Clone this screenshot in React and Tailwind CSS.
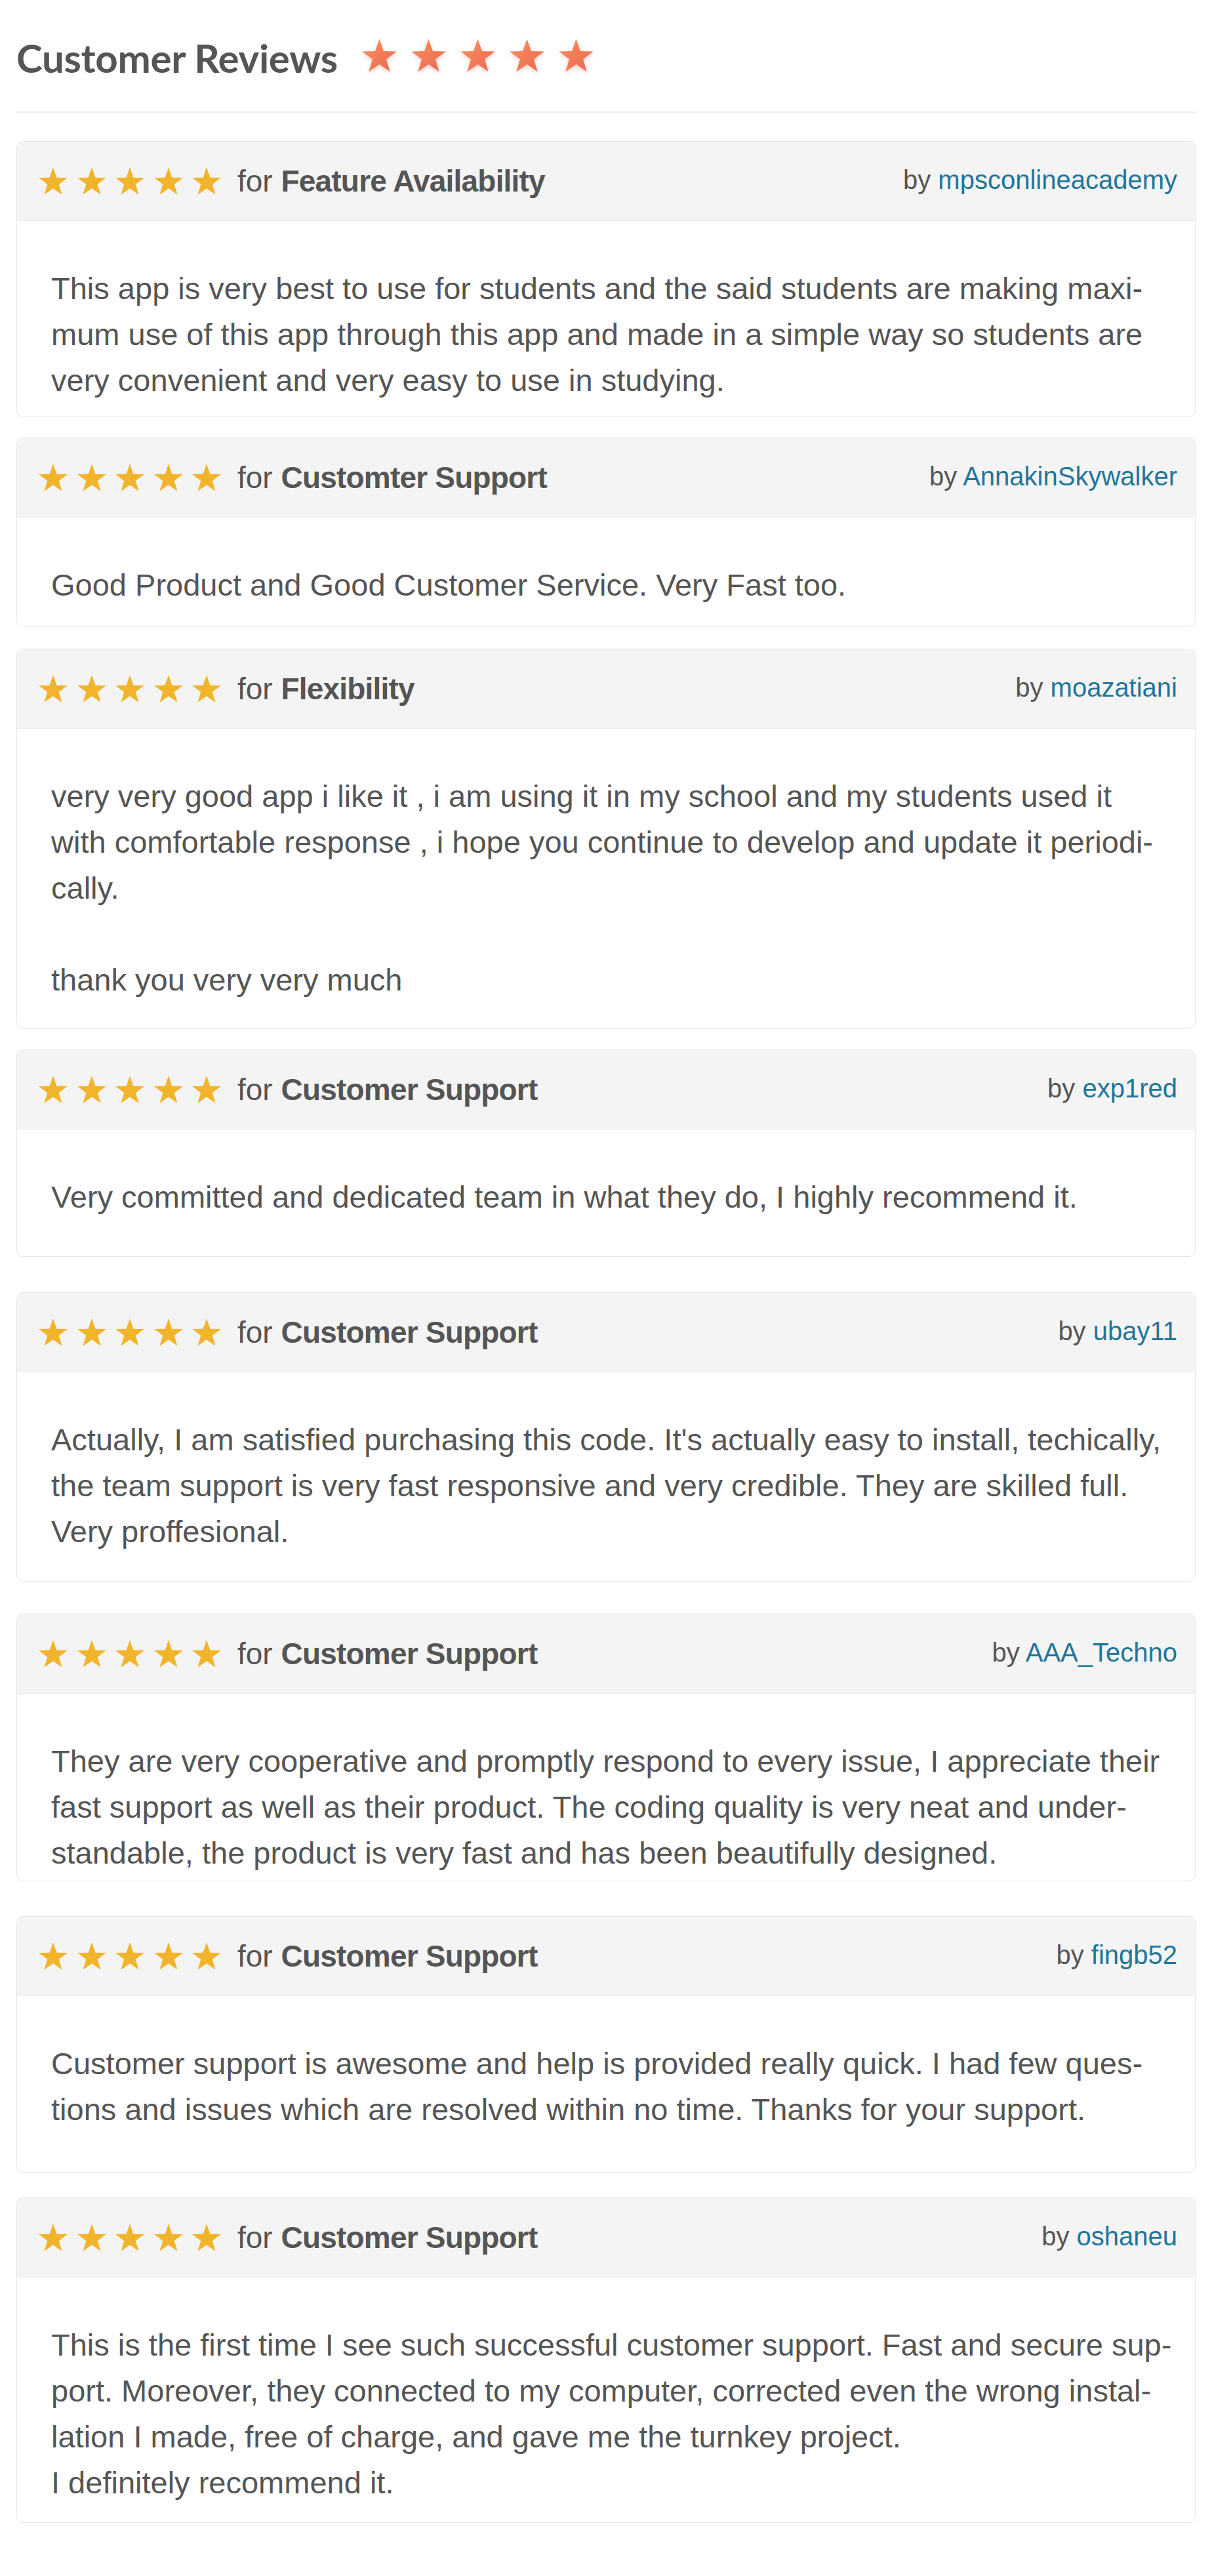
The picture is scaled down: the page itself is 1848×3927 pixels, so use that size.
const reviews = [
  {
    topic: "Feature Availability",
    author: "mpsconlineacademy",
    body: "pt-[68px] pb-[20px]",
    gap: "mb-[31px]",
    lines: [
      "This app is very best to use for students and the said students are making maxi-",
      "mum use of this app through this app and made in a simple way so students are",
      "very convenient and very easy to use in studying.",
    ],
  },
  {
    topic: "Customter Support",
    author: "AnnakinSkywalker",
    body: "pt-[68px] pb-[27px]",
    gap: "mb-[34px]",
    lines: ["Good Product and Good Customer Service. Very Fast too."],
  },
  {
    topic: "Flexibility",
    author: "moazatiani",
    body: "pt-[68px] pb-[38px]",
    gap: "mb-[32px]",
    lines: [
      "very very good app i like it , i am using it in my school and my students used it",
      "with comfortable response , i hope you continue to develop and update it periodi-",
      "cally.",
      "",
      "thank you very very much",
    ],
  },
  {
    topic: "Customer Support",
    author: "exp1red",
    body: "pt-[68px] pb-[55px]",
    gap: "mb-[54px]",
    lines: ["Very committed and dedicated team in what they do, I highly recommend it."],
  },
  {
    topic: "Customer Support",
    author: "ubay11",
    body: "pt-[68px] pb-[40px]",
    gap: "mb-[49px]",
    lines: [
      "Actually, I am satisfied purchasing this code. It's actually easy to install, techically,",
      "the team support is very fast responsive and very credible. They are skilled full.",
      "Very proffesional.",
    ],
  },
  {
    topic: "Customer Support",
    author: "AAA_Techno",
    body: "pt-[68px] pb-[7px]",
    gap: "mb-[53px]",
    lines: [
      "They are very cooperative and promptly respond to every issue, I appreciate their",
      "fast support as well as their product. The coding quality is very neat and under-",
      "standable, the product is very fast and has been beautifully designed.",
    ],
  },
  {
    topic: "Customer Support",
    author: "fingb52",
    body: "pt-[68px] pb-[60px]",
    gap: "mb-[38px]",
    lines: [
      "Customer support is awesome and help is provided really quick. I had few ques-",
      "tions and issues which are resolved within no time. Thanks for your support.",
    ],
  },
  {
    topic: "Customer Support",
    author: "oshaneu",
    body: "pt-[68px] pb-[25px]",
    gap: "mb-[40px]",
    lines: [
      "This is the first time I see such successful customer support. Fast and secure sup-",
      "port. Moreover, they connected to my computer, corrected even the wrong instal-",
      "lation I made, free of charge, and gave me the turnkey project.",
      "I definitely recommend it.",
    ],
  },
];

const STAR = "50,0 61.76,33.82 97.55,34.55 69.02,56.18 79.39,90.45 50,70 20.61,90.45 30.98,56.18 2.45,34.55 38.24,33.82";

function GoldStar() {
  return (
    <svg viewBox="0 0 100 91" className="w-[46px] h-[42px] shrink-0">
      <polygon points={STAR} fill="#f2b42a" />
    </svg>
  );
}

function CoralStar({ id }) {
  return (
    <svg viewBox="0 0 100 91" className="w-[55px] h-[51px] shrink-0 drop-shadow-[0_3px_3px_rgba(240,110,90,0.35)]">
      <defs>
        <linearGradient id={id} x1="0" y1="0" x2="1" y2="1">
          <stop offset="0" stopColor="#f8935c" />
          <stop offset="1" stopColor="#ec6553" />
        </linearGradient>
      </defs>
      <polygon points={STAR} fill={`url(#${id})`} />
    </svg>
  );
}

function ReviewCard({ r }) {
  return (
    <div className={`rounded-[10px] border border-[#e5e5e5] overflow-hidden ${r.gap}`}>
      <div className="h-[121px] bg-[#f4f4f4] border-b border-[#ebebeb] flex items-center justify-between pl-[32px] pr-[27px]">
        <div className="flex items-center">
          <div className="flex items-center gap-[12.5px]">
            {[0, 1, 2, 3, 4].map((i) => (
              <GoldStar key={i} />
            ))}
          </div>
          <div className="ml-[24px] text-[46px] text-[#555] leading-none">
            for <span className="font-bold tracking-[-0.8px]">{r.topic}</span>
          </div>
        </div>
        <div className="text-[40px] text-[#555] leading-none -mt-[4px]">
          by <span className="text-[#21759b]">{r.author}</span>
        </div>
      </div>
      <div className={`pl-[52px] pr-[30px] text-[47px] leading-[70px] text-[#555] ${r.body}`}>
        {r.lines.map((l, i) => (
          <div key={i} className="h-[70px] whitespace-nowrap">
            {l}
          </div>
        ))}
      </div>
    </div>
  );
}

export default function App() {
  return (
    <div className="w-[1848px] bg-white px-[25px] font-['Liberation_Sans',Arial,sans-serif]">
      <div className="pt-[28px] h-[148px] flex items-center">
        <h1 className="font-['Lato',sans-serif] font-bold text-[60px] text-[#555] tracking-[-0.3px] leading-none">
          Customer Reviews
        </h1>
        <div className="ml-[36px] flex items-center gap-[20px] -mt-[8px]">
          {[0, 1, 2, 3, 4].map((i) => (
            <CoralStar key={i} id={`cg${i}`} />
          ))}
        </div>
      </div>
      <div className="mt-[22px] h-[2px] bg-[#efefef]" />
      <div className="mt-[43px]">
        {reviews.map((r, i) => (
          <ReviewCard key={i} r={r} />
        ))}
      </div>
    </div>
  );
}
